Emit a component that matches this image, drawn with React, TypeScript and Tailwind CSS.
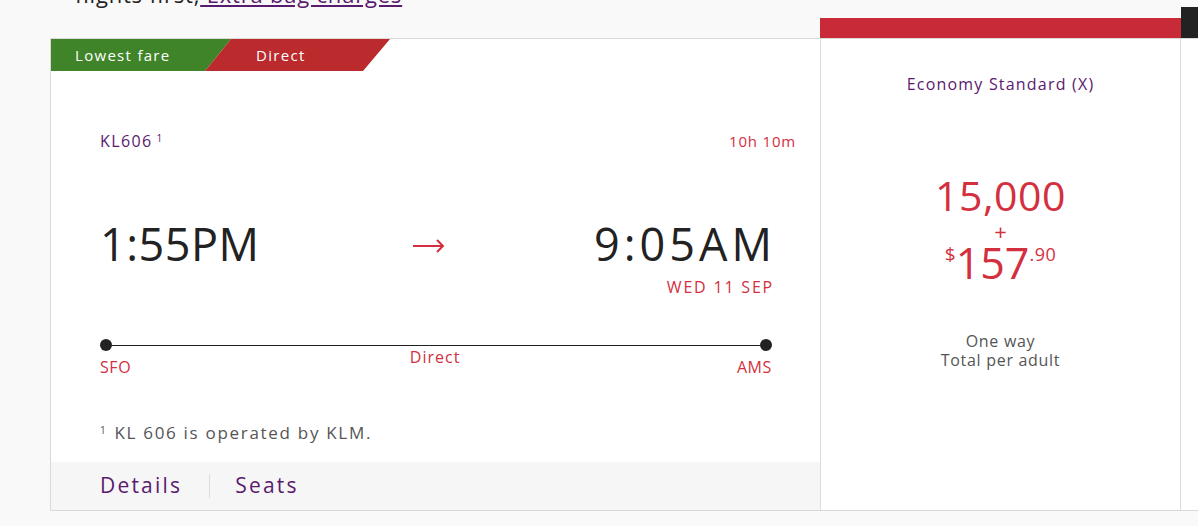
import React from 'react';

const font = { fontFamily: '"Open Sans", Lato, sans-serif' };

function Badges() {
  return (
    <div className="flex h-[32px] text-[15px] tracking-[1.3px] text-white">
      <div className="flex w-[180px] items-center bg-[#3f8428] pl-[24px] [clip-path:polygon(0_0,180px_0,154px_100%,0_100%)]">
        Lowest fare
      </div>
      <div className="-ml-[26px] flex w-[185px] items-center bg-[#bb2a2c] pl-[51px] [clip-path:polygon(26px_0,185px_0,158px_100%,0_100%)]">
        Direct
      </div>
    </div>
  );
}

function Arrow() {
  return (
    <svg width="33" height="14" viewBox="0 0 33 14" fill="none" stroke="#d32f3f" strokeWidth="2">
      <path d="M1 7h30" />
      <path d="M25 1l6 6-6 6" />
    </svg>
  );
}

function FlightCard() {
  return (
    <div className="flex flex-1 flex-col border-y border-l border-[#d9d9d9] bg-white">
      <Badges />

      {/* flight number + duration */}
      <div className="mt-[60px] flex justify-between pl-[49px] pr-[24px] text-[15px] leading-[20px] tracking-[0.8px]">
        <span className="text-[16px] tracking-[1.4px] text-[#5a1a6e]">
          KL606<sup className="ml-[4px] text-[10px]">1</sup>
        </span>
        <span className="text-[#d32f3f]">10h 10m</span>
      </div>

      {/* times */}
      <div className="mt-[67px] flex items-center pl-[49px] pr-[44px] text-[45px] leading-[52px] tracking-[0.5px] text-[#222]">
        <span>1:55PM</span>
        <span className="ml-[152px] pt-[4px]">
          <Arrow />
        </span>
        <span className="flex-1" />
        <span className="tracking-[4px]">9:05AM</span>
      </div>
      <div className="mt-[7px] pr-[46px] text-right text-[16px] leading-[20px] tracking-[1.8px] text-[#d32f3f]">
        WED 11 SEP
      </div>

      {/* timeline */}
      <div className="mt-[42px] pl-[49px] pr-[48px]">
        <div className="flex items-center">
          <div className="h-[12px] w-[12px] rounded-full bg-[#222]" />
          <div className="h-px flex-1 bg-[#222]" />
          <div className="h-[12px] w-[12px] rounded-full bg-[#222]" />
        </div>
        <div className="flex justify-between text-[16px] leading-[20px] tracking-[0.6px] text-[#d32f3f]">
          <span className="mt-[6px]">SFO</span>
          <span className="-mt-[4px] pl-[2px] tracking-[1px]">Direct</span>
          <span className="mt-[6px]">AMS</span>
        </div>
      </div>

      {/* footnote */}
      <div className="mt-[46px] pl-[49px] text-[17px] leading-[20px] tracking-[1.7px] text-[#555]">
        <sup className="mr-[7px] text-[10px]">1</sup>KL 606 is operated by KLM.
      </div>

      <div className="mt-auto flex h-[48px] items-center bg-[#f6f6f6] pl-[49px] text-[21px] tracking-[2.2px] text-[#5a1a6e]">
        <span>Details</span>
        <span className="ml-[27px] mr-[25px] h-[24px] w-px bg-[#dddddd]" />
        <span>Seats</span>
      </div>
    </div>
  );
}

function FarePanel() {
  return (
    <div className="flex w-[361px] flex-col">
      <div className="h-[11px]" />
      <div className="h-[20px] bg-[#c92a38]" />
      <div className="flex flex-1 flex-col items-center border-x border-t border-b border-x-[#dcdbe3] border-t-[#d9d9d9] border-b-[#d6d6d6] bg-white text-center">
        <div className="mt-[35px] text-[16px] leading-[20px] tracking-[1.2px] text-[#5a1a6e]">
          Economy Standard (X)
        </div>
        <div className="mt-[77px] text-[41px] leading-[48px] tracking-[0.5px] text-[#d32f3f]">15,000</div>
        <div className="mt-[2px] text-[22px] leading-[20px] text-[#d32f3f]">+</div>
        <div className="flex items-start leading-[44px] text-[#d32f3f]">
          <span className="mt-[-2px] text-[19px] leading-[30px]">$</span>
          <span className="text-[43px]">157</span>
          <span className="mt-[-2px] text-[18px] leading-[30px] tracking-[0.5px]">.90</span>
        </div>
        <div className="mt-[47px] text-[16px] leading-[19px] tracking-[0.7px] text-[#555]">
          One way
          <br />
          Total per adult
        </div>
      </div>
    </div>
  );
}

export default function App() {
  return (
    <div className="h-[526px] overflow-hidden bg-[#f9f9f9]" style={font}>
      <div className="-mt-[18px] h-[25px] pl-[75px] text-[22px] leading-[24px] tracking-[0.8px] text-[#222]">
        flights first,
        <a className="text-[#5a1a6e] underline"> Extra bag charges</a>
      </div>

      <div className="ml-[50px] flex h-[504px]">
        <div className="flex w-[770px] flex-col">
          <div className="h-[31px]" />
          <FlightCard />
        </div>
        <FarePanel />
        <div className="flex w-[17px] flex-col">
          <div className="h-[31px] bg-[#222]" />
          <div className="flex-1 border-y border-[#d9d9d9] bg-white" />
        </div>
      </div>
    </div>
  );
}
